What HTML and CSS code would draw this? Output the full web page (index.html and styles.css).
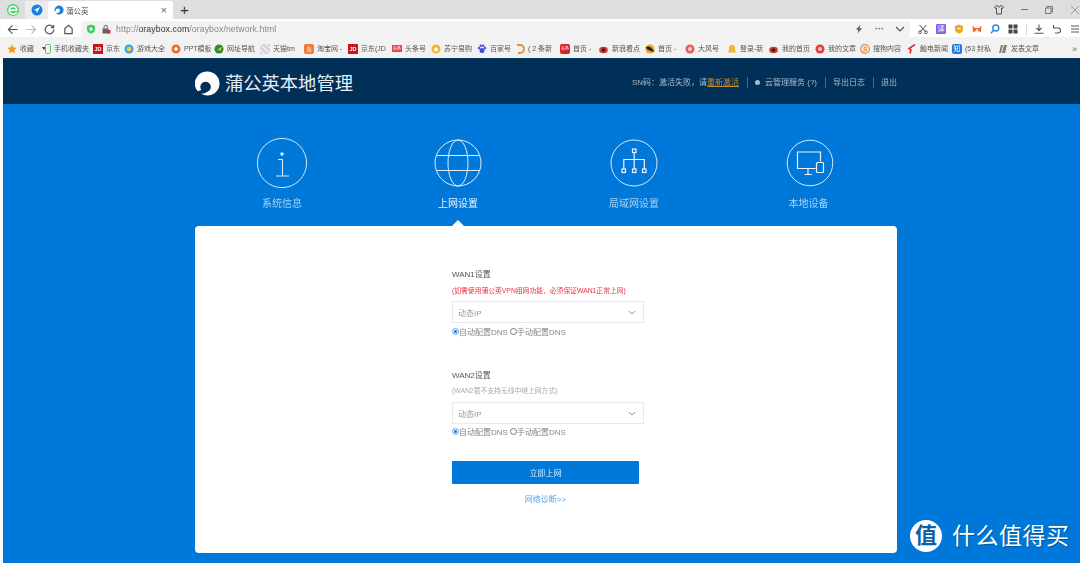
FILE: index.html
```html
<!DOCTYPE html>
<html lang="zh-CN">
<head>
<meta charset="utf-8">
<title>蒲公英</title>
<link rel="stylesheet" href="styles.css">
</head>
<body>
<div class="chrome">
  <div class="tabbar">
    <svg class="app-logo" viewBox="0 0 16 16"><circle cx="8" cy="8" r="7" fill="#4fd66f"/><path d="M3 8.400h9.400A4.600 4.600 0 0 0 8 4a4.200 4.200 0 0 0-4.400 4.400A4.300 4.300 0 0 0 8 12.800c1.800 0 3.200-.7 4.200-1.800" fill="none" stroke="#fff" stroke-width="1.700"/></svg>
    <div class="tab-pinned"><svg class="i12" viewBox="0 0 12 12"><circle cx="6" cy="6" r="5.500" fill="#1a7fe0"/><path d="M9 3 2.800 5.900l2.500.7.7 2.500z" fill="#fff"/></svg></div>
    <div class="tab-active">
      <svg class="i10" viewBox="0 0 12 12"><path d="M6 .5a5.500 5.500 0 1 1-4 9.300c1 .2 2 0 3-.6a2.500 2.500 0 1 0-2.800-2.400l-1.200 1A5.500 5.500 0 0 1 6 .5z" fill="#1a7fe0"/></svg>
      <span class="tab-title">蒲公英</span>
      <span class="tab-x">×</span>
    </div>
    <span class="tab-plus">+</span>
    <div class="win-ctl">
      <svg class="i12" viewBox="0 0 12 12"><path d="M3.500 1.500 1.500 3l1 1.500 1-.5v6h5V4l1 .5 1-1.500-2-1.500H7.500a1.500 1.500 0 0 1-3 0z" fill="none" stroke="#555"/></svg>
      <span class="ctl-min"></span>
      <svg class="i10" viewBox="0 0 10 10"><path d="M1.500 3h5.500v5.500H1.500zM3 3V1.500h5.500V7H7" fill="none" stroke="#777"/></svg>
      <svg class="i10" viewBox="0 0 10 10"><path d="m1 1 8 8M9 1l-8 8" stroke="#999"/></svg>
    </div>
  </div>
  <div class="navbar">
    <svg class="nav-ic" viewBox="0 0 12 12"><path d="M6 1.500 1.500 6 6 10.500M1.500 6h10" fill="none" stroke="#555" stroke-width="1.300"/></svg>
    <svg class="nav-ic" viewBox="0 0 12 12"><path d="M6 1.500 10.500 6 6 10.500M10.500 6H.5" fill="none" stroke="#bbb" stroke-width="1.300"/></svg>
    <svg class="nav-ic" viewBox="0 0 12 12"><path d="M10 3.500A4.700 4.700 0 1 0 10.700 6M10.500 1v3h-3" fill="none" stroke="#555" stroke-width="1.300"/></svg>
    <svg class="nav-ic" viewBox="0 0 12 12"><path d="M2 10.500V5l4-3.500L10 5v5.500z" fill="none" stroke="#555" stroke-width="1.300"/></svg>
    <div class="urlbar">
      <svg class="i10" viewBox="0 0 10 10"><path d="M5 .5 9 2v3.500C9 7.800 7 9 5 9.800 3 9 1 7.800 1 5.500V2z" fill="#3ecb62"/><path d="M5 3v4M3 5h4" stroke="#fff" stroke-width="1.200"/></svg>
      <svg class="i10 lock" viewBox="0 0 10 10"><rect x="1.500" y="4.500" width="6" height="5" fill="#666"/><path d="M3 4.500V3a1.700 1.700 0 0 1 3.400 0v1.500" fill="none" stroke="#666"/><rect x="6" y="6" width="3.500" height="3.500" fill="#c33"/></svg>
      <span class="url">http://<b>oraybox.com</b>/oraybox/network.html</span>
      <span class="url-tools">
        <svg class="i10" viewBox="0 0 10 10"><path d="M6.500 .5 2 5.700h2.600L3.500 9.500 8 4.300H5.400z" fill="#555"/></svg>
        <span class="dots">···</span>
        <svg class="i10" viewBox="0 0 10 10"><path d="m1 3 4 4 4-4" fill="none" stroke="#555" stroke-width="1.200"/></svg>
      </span>
    </div>
    <div class="ext">
      <svg class="i10" viewBox="0 0 10 10"><path d="M1.500 1 8 8M8.500 1 2 8" stroke="#666" stroke-width="1.100"/><circle cx="2" cy="8.300" r="1.400" fill="none" stroke="#666"/><circle cx="8" cy="8.300" r="1.400" fill="none" stroke="#666"/></svg>
      <span class="ext-box purple">译</span>
      <svg class="i10" viewBox="0 0 10 10"><path d="M5 .5 9 2v3.500C9 7.800 7 9 5 9.800 3 9 1 7.800 1 5.500V2z" fill="#f5a623"/><path d="M3.500 4.500h3" stroke="#fff"/></svg>
      <svg class="i10" viewBox="0 0 10 10"><path d="M.5 1.500 3 4h4l2.500-2.500-.5 7-2.500-1.500h-3L1 8.500z" fill="#f0683a"/><circle cx="5" cy="6" r="1" fill="#fff"/></svg>
      <svg class="i10" viewBox="0 0 10 10"><circle cx="5.800" cy="4" r="3" fill="none" stroke="#2f84e8" stroke-width="1.400"/><path d="m3.500 6.300-2.500 3" stroke="#2f84e8" stroke-width="1.400"/></svg>
      <svg class="i10" viewBox="0 0 10 10"><path d="M.5.500h4v4h-4zM5.500.500h4v4h-4zM.5 5.500h4v4h-4zM5.500 5.500h4v4h-4z" fill="#444"/></svg>
      <span class="ext-sep"></span>
      <svg class="i10" viewBox="0 0 10 10"><path d="M5 .5v6M2.500 4 5 6.500 7.500 4M.5 9.300h9" fill="none" stroke="#555" stroke-width="1.100"/></svg>
      <svg class="i10" viewBox="0 0 10 10"><path d="M1.500 1v3h3M1.500 4H6a2.500 2.500 0 0 1 0 5H3" fill="none" stroke="#555" stroke-width="1.100"/></svg>
      <svg class="i10" viewBox="0 0 10 10"><path d="M1 2h8M1 5h8M1 8h8" stroke="#555" stroke-width="1.100"/></svg>
    </div>
  </div>
  <div class="bookmarks">
    <span class="bm w38"><svg class="i10" viewBox="0 0 10 10"><path d="m5 .3 1.400 3.100 3.400.4-2.500 2.300.7 3.400L5 7.800 2 9.500l.7-3.400L.2 3.800l3.400-.4z" fill="#f39a1e"/></svg>收藏<i class="caret"></i></span>
    <span class="bm w48"><svg class="phone" viewBox="0 0 6 10"><rect x=".5" y=".5" width="5" height="9" rx="1" fill="none" stroke="#5bc36a"/></svg>手机收藏夹</span>
    <span class="bm w31"><i class="ic red">JD</i>京东</span>
    <span class="bm w47"><svg class="i10" viewBox="0 0 10 10"><circle cx="5" cy="5" r="4.500" fill="#3aa3e8"/><circle cx="5" cy="5" r="2.300" fill="#f6d04d"/></svg>游戏大全</span>
    <span class="bm w43"><svg class="i10" viewBox="0 0 10 10"><circle cx="5" cy="5" r="4.500" fill="#ef6a3a"/><circle cx="5" cy="5" r="1.800" fill="#fff"/></svg>PPT模板</span>
    <span class="bm w46"><svg class="i10" viewBox="0 0 10 10"><circle cx="5" cy="5" r="4.500" fill="#2c8a36"/><path d="M2 7 8 2.500 6 7.500 5 5.500z" fill="#f5d531"/></svg>网址导航</span>
    <span class="bm w44"><i class="ic pale"></i>天猫tm</span>
    <span class="bm w44"><i class="ic orange">淘</i>淘宝网 -</span>
    <span class="bm w44"><i class="ic red">JD</i>京东(JD</span>
    <span class="bm w39"><i class="ic redflat">头条</i>头条号</span>
    <span class="bm w46"><svg class="i10" viewBox="0 0 10 10"><circle cx="5" cy="5" r="4.500" fill="#f5b72f"/><circle cx="5" cy="5.500" r="2" fill="#fff"/></svg>苏宁易购</span>
    <span class="bm w38"><svg class="i10" viewBox="0 0 10 10"><circle cx="5" cy="6.500" r="2.500" fill="#3a4fd8"/><circle cx="2" cy="4" r="1.200" fill="#3a4fd8"/><circle cx="8" cy="4" r="1.200" fill="#3a4fd8"/><circle cx="3.800" cy="1.800" r="1.200" fill="#3a4fd8"/><circle cx="6.200" cy="1.800" r="1.200" fill="#3a4fd8"/></svg>百家号</span>
    <span class="bm w45"><svg class="i10" viewBox="0 0 10 10"><path d="M2 1h3a4 4 0 0 1 0 8H3" fill="none" stroke="#ec8b2e" stroke-width="1.800"/></svg>( 2 条新</span>
    <span class="bm w39"><i class="ic redround">头条</i>首页 -</span>
    <span class="bm w46"><svg class="i10" viewBox="0 0 10 10"><ellipse cx="4.500" cy="6" rx="4.300" ry="3.300" fill="#d8362f"/><circle cx="4.500" cy="6" r="1.700" fill="#222"/></svg>新浪看点</span>
    <span class="bm w40"><svg class="i10" viewBox="0 0 10 10"><circle cx="5" cy="5" r="4.500" fill="#e9a81c"/><path d="M.5 3.500C3 1.500 6 2 9.500 8 5 7 2 6 .5 3.500" fill="#222"/></svg>首页 -</span>
    <span class="bm w42"><svg class="i10" viewBox="0 0 10 10"><circle cx="5" cy="5" r="4.500" fill="#ea5a5f"/><circle cx="5" cy="5" r="2" fill="#fbd2d2"/></svg>大风号</span>
    <span class="bm w42"><svg class="i10" viewBox="0 0 10 10"><path d="M1 8.500C2 7 2 5 2 4a3 3 0 0 1 6 0c0 1 0 3 1 4.500z" fill="#edb92e"/></svg>登录-新</span>
    <span class="bm w46"><svg class="i10" viewBox="0 0 10 10"><ellipse cx="4.500" cy="6" rx="4.300" ry="3.300" fill="#d8362f"/><circle cx="4.500" cy="6" r="1.700" fill="#222"/></svg>我的首页</span>
    <span class="bm w45"><svg class="i10" viewBox="0 0 10 10"><circle cx="5" cy="5" r="4.500" fill="#e33c3c"/><circle cx="5" cy="5" r="2" fill="#f9c5c5"/></svg>我的文章</span>
    <span class="bm w47"><svg class="i10" viewBox="0 0 10 10"><circle cx="5" cy="5" r="4.300" fill="none" stroke="#ef8a3d" stroke-width="1.200"/><path d="M7 3.300H4v1.800h2.500v1.700H3" fill="none" stroke="#ef8a3d"/></svg>搜狗内容</span>
    <span class="bm w45"><svg class="i10" viewBox="0 0 10 10"><path d="M8 .5 2 4.500 4 6l-1 3.500" fill="none" stroke="#dd2d2d" stroke-width="1.600"/></svg>触电新闻</span>
    <span class="bm w46"><i class="ic blue">知</i>(53 封私</span>
    <span class="bm w46"><svg class="i10" viewBox="0 0 10 10"><path d="M1 9 3 1h2L3 9zM4 9l2-8h3L7 9z" fill="#8a7a66"/></svg>发表文章</span>
    <span class="bm-more">»</span>
  </div>
</div>

<div class="page">
  <header class="top">
    <div class="brand">
      <svg class="brand-logo" viewBox="0 0 26 26"><path d="M13 .5A12.500 12.500 0 0 1 25.500 13C25.500 20 20 25.500 13 25.500c-2.500 0-5-.6-7-2 2.500.2 4.500-.5 6-1.500a5.500 5.500 0 1 0-6.500-5.500c0 1.200.3 2.200 1 3.200L2.800 21A12.500 12.500 0 0 1 13 .5z" fill="#fff"/></svg>
      <span class="brand-name">蒲公英本地管理</span>
    </div>
    <nav class="top-links">
      <span>SN码：激活失败，请<a class="warn">重新激活</a></span>
      <span class="link-item"><i class="dot"></i>云管理服务 (?)</span>
      <span class="link-item">导出日志</span>
      <span class="link-item">退出</span>
    </nav>
  </header>

  <main class="main">
    <div class="steps">
      <div class="step">
        <svg class="step-ic" viewBox="0 0 50 50"><circle cx="25" cy="25" r="24.600" fill="none" stroke="#d5e9fa" stroke-width="1"/><circle cx="25" cy="16" r="1.700" fill="#e6f2fc"/><path d="M21 21.500h4.500V38M19 38h13" fill="none" stroke="#d5e9fa" stroke-width="1.100"/></svg>
        <span class="step-label">系统信息</span>
      </div>
      <div class="step is-active">
        <svg class="step-ic" viewBox="0 0 50 50"><g fill="none" stroke="#e1effb" stroke-width="1"><circle cx="25" cy="25" r="23"/><ellipse cx="25" cy="25" rx="10" ry="23"/><path d="M4 17.500h42M4 32.500h42"/></g></svg>
        <span class="step-label">上网设置</span>
      </div>
      <div class="step">
        <svg class="step-ic" viewBox="0 0 50 50"><circle cx="25" cy="25" r="23" fill="none" stroke="#d5e9fa" stroke-width="1"/><g fill="none" stroke="#eef6fd" stroke-width="1.200"><rect x="23.500" y="11" width="3.500" height="3.500"/><rect x="13" y="31" width="3.500" height="3.500"/><rect x="23.500" y="31" width="3.500" height="3.500"/><rect x="33.500" y="31" width="3.500" height="3.500"/><path d="M25.200 14.500V31M14.800 31v-9.500h20.500V31"/></g></svg>
        <span class="step-label">局域网设置</span>
      </div>
      <div class="step">
        <svg class="step-ic" viewBox="0 0 50 50"><circle cx="25" cy="25" r="22.800" fill="none" stroke="#d5e9fa" stroke-width="1"/><g fill="none" stroke="#eef6fd" stroke-width="1.200"><path d="M30.500 30.500H12.500V14h23v9.500M23 30.500v6M19.500 36.500h7.500"/><rect x="31.500" y="24.500" width="7" height="10" rx="1"/></g></svg>
        <span class="step-label">本地设备</span>
      </div>
    </div>

    <section class="card">
      <div class="form">
        <div class="group g1">
          <h3 class="g-title">WAN1设置</h3>
          <p class="g-note red-note">(如需使用蒲公英VPN组网功能，必须保证WAN1正常上网)</p>
          <div class="select"><span>动态IP</span><svg class="chev" viewBox="0 0 10 6"><path d="m1 1 4 4 4-4" fill="none" stroke="#777" stroke-width="1"/></svg></div>
          <div class="radios">
            <span class="radio on"></span><span>自动配置DNS</span><span class="radio r2"></span><span>手动配置DNS</span>
          </div>
        </div>
        <div class="group g2">
          <h3 class="g-title">WAN2设置</h3>
          <p class="g-note">(WAN2暂不支持无线中继上网方式)</p>
          <div class="select"><span>动态IP</span><svg class="chev" viewBox="0 0 10 6"><path d="m1 1 4 4 4-4" fill="none" stroke="#777" stroke-width="1"/></svg></div>
          <div class="radios">
            <span class="radio on"></span><span>自动配置DNS</span><span class="radio r2"></span><span>手动配置DNS</span>
          </div>
        </div>
        <button class="submit">立即上网</button>
        <a class="diag">网络诊断&gt;&gt;</a>
      </div>
    </section>
  </main>

  <div class="watermark">
    <span class="wm-logo">值</span>
    <span class="wm-text">什么值得买</span>
  </div>
</div>
</body>
</html>
```

FILE: styles.css
```css
* { box-sizing: border-box; }
html, body { margin: 0; padding: 0; height: 563px; overflow: hidden; background: #fff; }
body { font-family: "Liberation Sans", "Noto Sans CJK SC", sans-serif; color: #555; position: relative; }
svg { display: block; flex: none; }
.i10 { width: 10px; height: 10px; }
.i12 { width: 12px; height: 12px; }

.chrome { height: 58px; background: #f2f2f2; }
.tabbar { height: 19px; background: #dedede; display: flex; align-items: flex-end; position: relative; }
.app-logo { width: 14px; height: 14px; margin: 0 5px 2px 6px; }
.tab-pinned { width: 23px; height: 18px; background: #ececec; display: flex; align-items: center; justify-content: center; }
.tab-active { width: 125px; height: 18px; background: #fff; display: flex; align-items: center; padding: 0 6px; border-radius: 2px 2px 0 0; }
.tab-title { font-size: 7.500px; color: #555; margin-left: 2px; flex: 1; filter: blur(.3px); }
.tab-x { font-size: 11px; color: #666; line-height: 1; }
.tab-plus { font-size: 15px; line-height: 18px; color: #333; margin-left: 7px; }
.win-ctl { margin-left: auto; display: flex; align-items: center; gap: 16px; height: 19px; }
.ctl-min { width: 7px; height: 1px; background: #777; }

.navbar { height: 18px; background: #fff; display: flex; align-items: center; padding: 2px 0 0 7px; }
.nav-ic { width: 11px; height: 11px; margin-right: 7.500px; }
.urlbar { width: 830px; height: 16px; background: #f2f2f2; border-radius: 3px; display: flex; align-items: center; padding: 0 5px; }
.lock { margin-left: 5px; }
.url { font-size: 8.700px; color: #888; margin-left: 5px; letter-spacing: .1px; filter: blur(.25px); }
.url b { font-weight: 400; color: #333; }
.url-tools { margin-left: auto; display: flex; align-items: center; gap: 11px; }
.dots { font-size: 9px; line-height: 10px; color: #555; font-weight: 700; }
.ext { display: flex; align-items: center; gap: 8px; margin-left: 8px; }
.ext-box { width: 10px; height: 10px; font-size: 7px; line-height: 10px; text-align: center; color: #fff; border-radius: 1px; }
.purple { background: #8e63e6; }
.ext-sep { width: 1px; height: 11px; background: #d8d8d8; margin-right: -1px; }

.bookmarks { height: 21px; display: flex; align-items: center; padding: 2px 3px 0 7px; white-space: nowrap; overflow: hidden; }
.bm { display: flex; align-items: center; gap: 3px; font-size: 7px; line-height: 10px; color: #555; overflow: hidden; flex: none; filter: blur(.3px); }
.bm-more { font-size: 9px; line-height: 10px; color: #666; margin-left: auto; }
.w31 { width: 31px; } .w38 { width: 38px; } .w39 { width: 39px; } .w40 { width: 40px; } .w42 { width: 42px; } .w43 { width: 43px; }
.w44 { width: 44px; } .w45 { width: 45px; } .w46 { width: 46px; } .w47 { width: 47px; } .w48 { width: 48px; }
.phone { width: 6px; height: 10px; }
.caret { width: 0; height: 0; border: 2px solid transparent; border-top: 3px solid #444; margin: 2px 0 0 5px; }
.ic { width: 10px; height: 10px; flex: none; font-style: normal; font-size: 5px; line-height: 10px; text-align: center; color: #fff; }
.red { background: #c8161d; font-size: 5.500px; font-weight: 700; }
.redflat { background: #e8424a; height: 7px; line-height: 7px; font-size: 4px; }
.redround { background: #d8232a; border-radius: 2px; font-size: 4px; }
.orange { background: #f07a3e; border-radius: 2px; }
.blue { background: #1f7be8; border-radius: 2px; font-size: 7px; }
.pale { background: repeating-linear-gradient(45deg, #d7cfe0, #d7cfe0 2px, #efe9d9 2px, #efe9d9 4px); }

.page { position: absolute; left: 3px; top: 58px; right: 0; height: 505px; background: #0078d9; border-top: 1px solid #0a3b63; }
.top { height: 45px; background: #002f58; padding: 0 183px 0 192px; display: flex; align-items: center; justify-content: space-between; }
.brand { display: flex; align-items: center; gap: 5px; margin-top: 4px; }
.brand-logo { width: 25px; height: 25px; }
.brand-name { font-size: 18.300px; color: #e8eef4; line-height: 25px; }
.top-links { display: flex; align-items: center; font-size: 8px; color: #a9b9c8; line-height: 11px; filter: blur(.2px); margin-top: 2px; }
.warn { color: #c98a2a; text-decoration: underline; }
.link-item { display: flex; align-items: center; border-left: 1px solid #4b6a85; margin-left: 7.500px; padding-left: 7.500px; }
.dot { width: 5px; height: 5px; border-radius: 50%; background: #a9b9c8; margin-right: 5px; }

.main { padding: 34px 0 0 192px; }
.steps { width: 704px; height: 88px; display: grid; grid-template-columns: repeat(4, 176px); margin-left: -1px; }
.step { display: flex; flex-direction: column; align-items: center; color: #a4d0f4; position: relative; }
.step-ic { width: 50px; height: 50px; }
.step-label { font-size: 10px; line-height: 14px; margin-top: 9px; filter: blur(.2px); }
.step:last-child .step-label { margin-right: 3px; }
.is-active { color: #e8f3fc; }
.is-active::after { content: ""; position: absolute; left: 50%; bottom: 0; margin-left: -6px; border: 6px solid transparent; border-top: 0; border-bottom: 6px solid #fff; }
.card { width: 702px; height: 327px; background: #fff; border-radius: 4px; display: block; }
.form { width: 192px; margin-left: 257px; padding-top: 43px; filter: blur(.2px); }
.g-title { margin: 0; font-size: 8px; font-weight: 400; line-height: 12px; color: #555; }
.g-note { margin: 5px 0 0; font-size: 6.800px; line-height: 10px; color: #aaa; white-space: nowrap; }
.red-note { color: #f0303a; }
.select { margin-top: 5px; height: 22px; border: 1px solid #eaeaea; display: flex; align-items: center; justify-content: space-between; padding: 0 7px 0 5px; font-size: 8px; color: #999; }
.chev { width: 8px; height: 5px; }
.radios { display: flex; align-items: center; margin-top: 2px; height: 12px; font-size: 8px; color: #888; white-space: nowrap; }
.radio { width: 7px; height: 7px; border-radius: 50%; border: 1px solid #777; flex: none; }
.radio.on { background: #0a6ee0; border-color: #8fc0f0; box-shadow: inset 0 0 0 1px #fff; }
.r2 { margin-left: 2px; }
.g2 { margin-top: 33px; }
.g2 .g-note { margin-top: 4px; }
.g2 .select { margin-top: 6px; }
.g2 .radios { margin-top: 1px; }
.submit { display: block; width: 187px; height: 23px; margin-top: 24px; background: #0078d9; color: #dcedfb; border: 0; border-radius: 1px; font: 400 8px "Liberation Sans", "Noto Sans CJK SC", sans-serif; }
.diag { display: block; width: 187px; text-align: center; margin-top: 10px; font-size: 8px; line-height: 12px; color: #5aa7ea; }

.watermark { position: absolute; left: 907px; bottom: 11px; display: flex; align-items: center; gap: 10px; }
.wm-logo { width: 32px; height: 32px; border-radius: 50%; background: #fff; color: #0b5fa8; font-size: 22px; line-height: 32px; text-align: center; font-weight: 700; }
.wm-text { color: #fff; font-size: 23px; line-height: 32px; letter-spacing: .5px; text-shadow: 1px 1px 1px rgba(0,0,0,.3); }
```
